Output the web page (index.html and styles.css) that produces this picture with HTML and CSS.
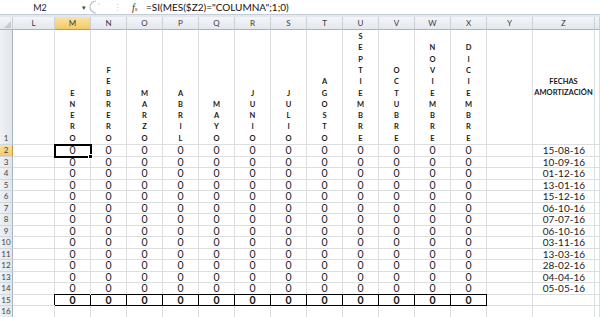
FILE: index.html
```html
<!DOCTYPE html>
<html>
<head>
<meta charset="utf-8">
<link rel="stylesheet" href="styles.css">
</head>
<body>
<div class="fbar">
  <div class="namebox"><span class="nm">M2</span><span class="dd">▾</span></div>
  <div class="fsep">
    <svg width="14" height="14" viewBox="0 0 14 14"><path d="M7 1 A6 6 0 0 0 7 13" fill="none" stroke="#b8c0ca" stroke-width="1.2"/><circle cx="10" cy="4" r="0.7" fill="#b8c0ca"/></svg>
    <span class="dots">⋮</span>
    <span class="fx"><i>f</i><small>x</small></span>
  </div>
  <div class="formula">=SI(MES($Z2)="COLUMNA";1;0)</div>
</div>
<div class="band"></div>
<div class="sheet">
  <div class="r hdr">
    <div class="corner"><svg width="7" height="7" viewBox="0 0 7 7"><path d="M7 0 L7 7 L0 7 Z" fill="#c6ccd3"/></svg></div>
    <div class="ch">L</div><div class="ch on">M</div><div class="ch">N</div><div class="ch">O</div><div class="ch">P</div><div class="ch">Q</div><div class="ch">R</div><div class="ch">S</div><div class="ch">T</div><div class="ch">U</div><div class="ch">V</div><div class="ch">W</div><div class="ch">X</div><div class="ch">Y</div><div class="ch">Z</div><div class="ch"></div>
  </div>
  <div class="r tall">
    <div class="rh">1</div><div></div>
    <div class="v">E<br>N<br>E<br>R<br>O</div>
    <div class="v">F<br>E<br>B<br>R<br>E<br>R<br>O</div>
    <div class="v">M<br>A<br>R<br>Z<br>O</div>
    <div class="v">A<br>B<br>R<br>I<br>L</div>
    <div class="v">M<br>A<br>Y<br>O</div>
    <div class="v">J<br>U<br>N<br>I<br>O</div>
    <div class="v">J<br>U<br>L<br>I<br>O</div>
    <div class="v">A<br>G<br>O<br>S<br>T<br>O</div>
    <div class="v">S<br>E<br>P<br>T<br>I<br>E<br>M<br>B<br>R<br>E</div>
    <div class="v">O<br>C<br>T<br>U<br>B<br>R<br>E</div>
    <div class="v">N<br>O<br>V<br>I<br>E<br>M<br>B<br>R<br>E</div>
    <div class="v">D<br>I<br>C<br>I<br>E<br>M<br>B<br>R<br>E</div>
    <div></div>
    <div class="fh">FECHAS<br>AMORTIZACIÓN</div>
    <div></div>
  </div>
  <div class="r"><div class="rh on">2</div><div></div><div class="n sel">0</div><div class="n">0</div><div class="n">0</div><div class="n">0</div><div class="n">0</div><div class="n">0</div><div class="n">0</div><div class="n">0</div><div class="n">0</div><div class="n">0</div><div class="n">0</div><div class="n">0</div><div></div><div class="n d">15-08-16</div><div></div></div>
  <div class="r"><div class="rh">3</div><div></div><div class="n">0</div><div class="n">0</div><div class="n">0</div><div class="n">0</div><div class="n">0</div><div class="n">0</div><div class="n">0</div><div class="n">0</div><div class="n">0</div><div class="n">0</div><div class="n">0</div><div class="n">0</div><div></div><div class="n d">10-09-16</div><div></div></div>
  <div class="r"><div class="rh">4</div><div></div><div class="n">0</div><div class="n">0</div><div class="n">0</div><div class="n">0</div><div class="n">0</div><div class="n">0</div><div class="n">0</div><div class="n">0</div><div class="n">0</div><div class="n">0</div><div class="n">0</div><div class="n">0</div><div></div><div class="n d">01-12-16</div><div></div></div>
  <div class="r"><div class="rh">5</div><div></div><div class="n">0</div><div class="n">0</div><div class="n">0</div><div class="n">0</div><div class="n">0</div><div class="n">0</div><div class="n">0</div><div class="n">0</div><div class="n">0</div><div class="n">0</div><div class="n">0</div><div class="n">0</div><div></div><div class="n d">13-01-16</div><div></div></div>
  <div class="r"><div class="rh">6</div><div></div><div class="n">0</div><div class="n">0</div><div class="n">0</div><div class="n">0</div><div class="n">0</div><div class="n">0</div><div class="n">0</div><div class="n">0</div><div class="n">0</div><div class="n">0</div><div class="n">0</div><div class="n">0</div><div></div><div class="n d">15-12-16</div><div></div></div>
  <div class="r"><div class="rh">7</div><div></div><div class="n">0</div><div class="n">0</div><div class="n">0</div><div class="n">0</div><div class="n">0</div><div class="n">0</div><div class="n">0</div><div class="n">0</div><div class="n">0</div><div class="n">0</div><div class="n">0</div><div class="n">0</div><div></div><div class="n d">06-10-16</div><div></div></div>
  <div class="r"><div class="rh">8</div><div></div><div class="n">0</div><div class="n">0</div><div class="n">0</div><div class="n">0</div><div class="n">0</div><div class="n">0</div><div class="n">0</div><div class="n">0</div><div class="n">0</div><div class="n">0</div><div class="n">0</div><div class="n">0</div><div></div><div class="n d">07-07-16</div><div></div></div>
  <div class="r"><div class="rh">9</div><div></div><div class="n">0</div><div class="n">0</div><div class="n">0</div><div class="n">0</div><div class="n">0</div><div class="n">0</div><div class="n">0</div><div class="n">0</div><div class="n">0</div><div class="n">0</div><div class="n">0</div><div class="n">0</div><div></div><div class="n d">06-10-16</div><div></div></div>
  <div class="r"><div class="rh">10</div><div></div><div class="n">0</div><div class="n">0</div><div class="n">0</div><div class="n">0</div><div class="n">0</div><div class="n">0</div><div class="n">0</div><div class="n">0</div><div class="n">0</div><div class="n">0</div><div class="n">0</div><div class="n">0</div><div></div><div class="n d">03-11-16</div><div></div></div>
  <div class="r"><div class="rh">11</div><div></div><div class="n">0</div><div class="n">0</div><div class="n">0</div><div class="n">0</div><div class="n">0</div><div class="n">0</div><div class="n">0</div><div class="n">0</div><div class="n">0</div><div class="n">0</div><div class="n">0</div><div class="n">0</div><div></div><div class="n d">13-03-16</div><div></div></div>
  <div class="r"><div class="rh">12</div><div></div><div class="n">0</div><div class="n">0</div><div class="n">0</div><div class="n">0</div><div class="n">0</div><div class="n">0</div><div class="n">0</div><div class="n">0</div><div class="n">0</div><div class="n">0</div><div class="n">0</div><div class="n">0</div><div></div><div class="n d">28-02-16</div><div></div></div>
  <div class="r"><div class="rh">13</div><div></div><div class="n">0</div><div class="n">0</div><div class="n">0</div><div class="n">0</div><div class="n">0</div><div class="n">0</div><div class="n">0</div><div class="n">0</div><div class="n">0</div><div class="n">0</div><div class="n">0</div><div class="n">0</div><div></div><div class="n d">04-04-16</div><div></div></div>
  <div class="r"><div class="rh">14</div><div></div><div class="n">0</div><div class="n">0</div><div class="n">0</div><div class="n">0</div><div class="n">0</div><div class="n">0</div><div class="n">0</div><div class="n">0</div><div class="n">0</div><div class="n">0</div><div class="n">0</div><div class="n">0</div><div></div><div class="n d">05-05-16</div><div></div></div>
  <div class="r"><div class="rh">15</div><div></div><div class="n t first">0</div><div class="n t">0</div><div class="n t">0</div><div class="n t">0</div><div class="n t">0</div><div class="n t">0</div><div class="n t">0</div><div class="n t">0</div><div class="n t">0</div><div class="n t">0</div><div class="n t">0</div><div class="n t">0</div><div></div><div></div><div></div></div>
  <div class="r"><div class="rh">16</div><div></div><div></div><div></div><div></div><div></div><div></div><div></div><div></div><div></div><div></div><div></div><div></div><div></div><div></div><div></div><div></div></div>
</div>
</body>
</html>
```

FILE: styles.css
```css
html, body {
  margin: 0;
  padding: 0;
}
body {
  width: 600px;
  height: 317px;
  overflow: hidden;
  background: #fff;
  font-family: Lato, "Open Sans", "Liberation Sans", sans-serif;
  color: #222;
}
.fbar {
  display: flex;
  height: 14px;
  border-bottom: 1px solid #c3ccd6;
  background: #fff;
}
.namebox {
  width: 88px;
  display: flex;
  align-items: center;
  font-size: 9px;
  color: #222;
}
.nm {
  width: 80px;
  text-align: center;
}
.dd {
  width: 8px;
  font-size: 7px;
  color: #444;
  text-align: center;
}
.fsep {
  width: 52px;
  display: flex;
  align-items: center;
  background: #fff;
  color: #9aa4b0;
}
.fsep svg {
  margin-left: 1px;
}
.dots {
  font-size: 9px;
  margin-left: 10px;
  color: #c5ccd4;
}
.fx {
  margin-left: 10px;
  font-family: "Liberation Serif", serif;
  font-size: 10px;
  color: #333;
}
.fx small {
  font-size: 6px;
  font-style: italic;
}
.formula {
  flex: 1;
  display: flex;
  align-items: center;
  padding-left: 6px;
  font-size: 10px;
  color: #111;
}
.band {
  height: 2px;
  background: #e3e8ee;
}
.r {
  display: grid;
  grid-template-columns: 13px 42px repeat(12, 36px) 46px 62px 5px;
  height: 11.5px;
}
.r > div {
  box-sizing: border-box;
  border-right: 1px solid #dcdedf;
  border-bottom: 1px solid #dcdedf;
  min-width: 0;
}
.r.hdr {
  height: 13px;
}
.r.hdr > div {
  background: linear-gradient(#f3f5f8, #e3e8ee);
  border-right: 1px solid #c9d0d8;
  border-bottom: 1px solid #a9b4c1;
  font-size: 8px;
  color: #3a3a3a;
  display: flex;
  align-items: center;
  justify-content: center;
}
.r.hdr > div.on {
  background: linear-gradient(#fbe3a5, #f4c965);
  border-bottom-color: #c29b3e;
}
.r.hdr > .corner {
  align-items: flex-end;
  justify-content: flex-end;
  padding: 0 1px 1px 0;
}
.r.tall {
  height: 115px;
}
.r > .rh {
  background: linear-gradient(90deg, #eef1f5, #e2e7ed);
  border-right: 1px solid #a9b4c1;
  border-bottom: 1px solid #cfd6de;
  font-size: 8px;
  color: #444;
  display: flex;
  align-items: center;
  justify-content: center;
}
.r > .rh.on {
  background: linear-gradient(#fbe3a5, #f4c965);
  border-right-color: #c29b3e;
}
.r.tall > .rh {
  align-items: flex-end;
  padding-bottom: 1px;
}
.r > .v {
  font-size: 7.5px;
  font-weight: 700;
  line-height: 11.3px;
  text-align: center;
  display: flex;
  align-items: flex-end;
  justify-content: center;
  color: #1a1a1a;
  padding-bottom: 0;
}
.r > .fh {
  font-size: 7.5px;
  font-weight: 700;
  line-height: 11px;
  text-align: center;
  display: flex;
  align-items: center;
  justify-content: center;
  color: #1a1a1a;
}
.r > .n {
  display: flex;
  align-items: center;
  justify-content: center;
  font-size: 10.5px;
  line-height: 1;
  color: #222;
}
.r > .d {
  font-size: 10px;
  justify-content: flex-end;
  padding-right: 9px;
}
.r > .sel {
  position: relative;
  z-index: 2;
  outline: 2px solid #000;
  outline-offset: -1px;
}
.r > .sel::after {
  content: "";
  position: absolute;
  right: -3px;
  bottom: -3px;
  width: 3px;
  height: 3px;
  background: #000;
  border: 1px solid #fff;
}
.r > .t {
  font-weight: 700;
  border-right-color: #000;
  border-bottom-color: #000;
  box-shadow: 0 -1px 0 #000;
  color: #111;
}
.r > .t.first {
  box-shadow: -1px -1px 0 #000;
}
```
